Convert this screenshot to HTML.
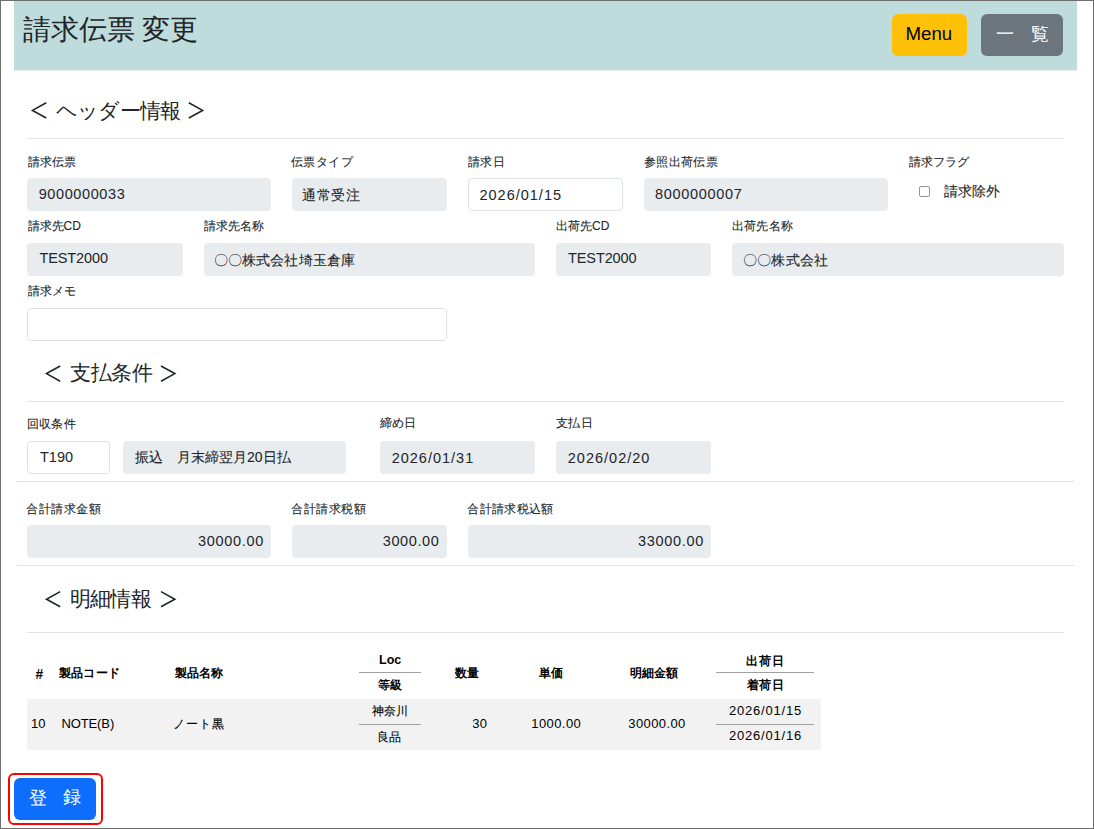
<!DOCTYPE html>
<html lang="ja"><head><meta charset="utf-8"><title>請求伝票 変更</title>
<style>
html,body{margin:0;padding:0;background:#fff}
body{width:1094px;height:829px;position:relative;overflow:hidden;font-family:"Liberation Sans",sans-serif;color:#212529}
.frame{position:absolute;left:0;top:0;width:1094px;height:829px;border:1px solid #6e6e6e;box-sizing:border-box}
.t{position:absolute;line-height:1;white-space:nowrap}
</style></head><body>
<div class="frame"></div>
<div style="position:absolute;left:14px;top:1px;width:1063px;height:69px;background:#bedcdc;border-radius:0px;box-sizing:border-box;"></div>
<div style="position:absolute;left:14px;top:70px;width:1063px;height:1px;background:#e9eaee"></div>
<div style="position:absolute;left:892px;top:14px;width:75px;height:42px;background:#ffc107;border-radius:6px;box-sizing:border-box;"></div>
<div style="position:absolute;left:981px;top:14px;width:82px;height:42px;background:#6c757d;border-radius:6px;box-sizing:border-box;"></div>
<div style="position:absolute;left:27px;top:138px;width:1037px;height:1px;background:#e0e4e8"></div>
<div style="position:absolute;left:27px;top:401px;width:1037px;height:1px;background:#e0e4e8"></div>
<div style="position:absolute;left:17px;top:481px;width:1057px;height:1px;background:#e0e4e8"></div>
<div style="position:absolute;left:17px;top:565px;width:1057px;height:1px;background:#e0e4e8"></div>
<div style="position:absolute;left:27px;top:632px;width:1037px;height:1px;background:#e0e4e8"></div>
<div style="position:absolute;left:27px;top:178px;width:244px;height:33px;background:#e9ecef;border-radius:4px;box-sizing:border-box;"></div>
<div style="position:absolute;left:292px;top:178px;width:155px;height:33px;background:#e9ecef;border-radius:4px;box-sizing:border-box;"></div>
<div style="position:absolute;left:468px;top:178px;width:155px;height:33px;background:#fff;border:1px solid #dee2e6;border-radius:4px;box-sizing:border-box;"></div>
<div style="position:absolute;left:644px;top:178px;width:244px;height:33px;background:#e9ecef;border-radius:4px;box-sizing:border-box;"></div>
<div style="position:absolute;left:919px;top:186px;width:11px;height:11px;background:#fff;border:1px solid #959595;border-radius:2px;box-sizing:border-box;"></div>
<div style="position:absolute;left:27px;top:243px;width:156px;height:33px;background:#e9ecef;border-radius:4px;box-sizing:border-box;"></div>
<div style="position:absolute;left:204px;top:243px;width:331px;height:33px;background:#e9ecef;border-radius:4px;box-sizing:border-box;"></div>
<div style="position:absolute;left:556px;top:243px;width:155px;height:33px;background:#e9ecef;border-radius:4px;box-sizing:border-box;"></div>
<div style="position:absolute;left:732px;top:243px;width:332px;height:33px;background:#e9ecef;border-radius:4px;box-sizing:border-box;"></div>
<div style="position:absolute;left:27px;top:308px;width:420px;height:33px;background:#fff;border:1px solid #dee2e6;border-radius:4px;box-sizing:border-box;"></div>
<div style="position:absolute;left:27px;top:441px;width:83px;height:33px;background:#fff;border:1px solid #dee2e6;border-radius:4px;box-sizing:border-box;"></div>
<div style="position:absolute;left:123px;top:441px;width:223px;height:33px;background:#e9ecef;border-radius:4px;box-sizing:border-box;"></div>
<div style="position:absolute;left:380px;top:441px;width:155px;height:33px;background:#e9ecef;border-radius:4px;box-sizing:border-box;"></div>
<div style="position:absolute;left:556px;top:441px;width:155px;height:33px;background:#e9ecef;border-radius:4px;box-sizing:border-box;"></div>
<div style="position:absolute;left:27px;top:525px;width:244px;height:33px;background:#e9ecef;border-radius:4px;box-sizing:border-box;"></div>
<div style="position:absolute;left:292px;top:525px;width:155px;height:33px;background:#e9ecef;border-radius:4px;box-sizing:border-box;"></div>
<div style="position:absolute;left:468px;top:525px;width:243px;height:33px;background:#e9ecef;border-radius:4px;box-sizing:border-box;"></div>
<div style="position:absolute;left:27px;top:699px;width:794px;height:51px;background:#f2f2f2;border-radius:0px;box-sizing:border-box;"></div>
<div style="position:absolute;left:359px;top:672px;width:62px;height:1px;background:#a0a0a0"></div>
<div style="position:absolute;left:359px;top:724px;width:62px;height:1px;background:#a0a0a0"></div>
<div style="position:absolute;left:716px;top:672px;width:98px;height:1px;background:#a0a0a0"></div>
<div style="position:absolute;left:716px;top:724px;width:98px;height:1px;background:#a0a0a0"></div>
<div style="position:absolute;left:14px;top:778px;width:82px;height:42px;background:#0d6efd;border-radius:6px;box-sizing:border-box;"></div>
<div style="position:absolute;left:8px;top:773px;width:95px;height:52px;background:transparent;border-radius:6px;box-sizing:border-box;border:2px solid #ff0000;"></div>
<svg style="position:absolute;left:0;top:0" width="1094" height="829"><path d="M46.2 102.80000000000001 L32.5 110.4 L46.2 118.0" fill="none" stroke="#212529" stroke-width="1.6"/><path d="M188.8 102.80000000000001 L202.6 110.4 L188.8 118.0" fill="none" stroke="#212529" stroke-width="1.6"/><path d="M60.2 366.0 L46.5 373.6 L60.2 381.20000000000005" fill="none" stroke="#212529" stroke-width="1.6"/><path d="M161 366.0 L174.8 373.6 L161 381.20000000000005" fill="none" stroke="#212529" stroke-width="1.6"/><path d="M60.2 591.6 L46.5 599.2 L60.2 606.8000000000001" fill="none" stroke="#212529" stroke-width="1.6"/><path d="M161 591.6 L174.8 599.2 L161 606.8000000000001" fill="none" stroke="#212529" stroke-width="1.6"/></svg>
<div class="t" style="left:22.5px;top:16px;font-size:28.0px;letter-spacing:0px;font-weight:400;color:#212529;">請求伝票 変更</div>
<div class="t" style="left:905.5px;top:25px;font-size:18.7px;letter-spacing:0px;font-weight:400;color:#000;">Menu</div>
<div class="t" style="left:995.5px;top:26px;font-size:17.6px;letter-spacing:0.0px;font-weight:400;color:#fff;">一</div>
<div class="t" style="left:1030.5px;top:26px;font-size:17.6px;letter-spacing:0.0px;font-weight:400;color:#fff;">覧</div>
<div class="t" style="left:56px;top:100px;font-size:21px;letter-spacing:-0.8px;font-weight:400;color:#212529;">ヘッダー情報</div>
<div class="t" style="left:69.75px;top:362px;font-size:21px;letter-spacing:-0.2px;font-weight:400;color:#212529;">支払条件</div>
<div class="t" style="left:69.7px;top:588px;font-size:21px;letter-spacing:-0.6px;font-weight:400;color:#212529;">明細情報</div>
<div class="t" style="left:27.55px;top:156px;font-size:12px;letter-spacing:0.2px;font-weight:400;color:#212529;-webkit-text-stroke:0.1px #212529;">請求伝票</div>
<div class="t" style="left:291.1px;top:156px;font-size:12px;letter-spacing:0.4px;font-weight:400;color:#212529;-webkit-text-stroke:0.1px #212529;">伝票タイプ</div>
<div class="t" style="left:468px;top:156px;font-size:12px;letter-spacing:0.3px;font-weight:400;color:#212529;-webkit-text-stroke:0.1px #212529;">請求日</div>
<div class="t" style="left:643.8px;top:156px;font-size:12px;letter-spacing:0.4px;font-weight:400;color:#212529;-webkit-text-stroke:0.1px #212529;">参照出荷伝票</div>
<div class="t" style="left:908.6px;top:156px;font-size:12px;letter-spacing:0.2px;font-weight:400;color:#212529;-webkit-text-stroke:0.1px #212529;">請求フラグ</div>
<div class="t" style="left:38.7px;top:187px;font-size:14.5px;letter-spacing:0.6px;font-weight:400;color:#212529;">9000000033</div>
<div class="t" style="left:302px;top:188px;font-size:14px;letter-spacing:0.5px;font-weight:400;color:#212529;-webkit-text-stroke:0.1px #212529;">通常受注</div>
<div class="t" style="left:479.45px;top:188px;font-size:14.5px;letter-spacing:1.0px;font-weight:400;color:#212529;">2026/01/15</div>
<div class="t" style="left:654.95px;top:187px;font-size:14.5px;letter-spacing:0.7px;font-weight:400;color:#212529;">8000000007</div>
<div class="t" style="left:944.35px;top:185px;font-size:13.8px;letter-spacing:-0.2px;font-weight:400;color:#212529;-webkit-text-stroke:0.1px #212529;">請求除外</div>
<div class="t" style="left:27.5px;top:220px;font-size:12px;letter-spacing:0.0px;font-weight:400;color:#212529;-webkit-text-stroke:0.1px #212529;">請求先CD</div>
<div class="t" style="left:203.65px;top:220px;font-size:12px;letter-spacing:0.0px;font-weight:400;color:#212529;-webkit-text-stroke:0.1px #212529;">請求先名称</div>
<div class="t" style="left:556px;top:220px;font-size:12px;letter-spacing:0.0px;font-weight:400;color:#212529;-webkit-text-stroke:0.1px #212529;">出荷先CD</div>
<div class="t" style="left:732px;top:220px;font-size:12px;letter-spacing:0.2px;font-weight:400;color:#212529;-webkit-text-stroke:0.1px #212529;">出荷先名称</div>
<div class="t" style="left:39.45px;top:251px;font-size:14.5px;letter-spacing:-0.1px;font-weight:400;color:#212529;">TEST2000</div>
<div class="t" style="left:214px;top:253px;font-size:14px;letter-spacing:0.1px;font-weight:400;color:#212529;-webkit-text-stroke:0.1px #212529;">〇〇株式会社埼玉倉庫</div>
<div class="t" style="left:568px;top:251px;font-size:14.5px;letter-spacing:-0.1px;font-weight:400;color:#212529;">TEST2000</div>
<div class="t" style="left:743px;top:253px;font-size:14px;letter-spacing:0.2px;font-weight:400;color:#212529;-webkit-text-stroke:0.1px #212529;">〇〇株式会社</div>
<div class="t" style="left:28px;top:285px;font-size:12px;letter-spacing:0.0px;font-weight:400;color:#212529;-webkit-text-stroke:0.1px #212529;">請求メモ</div>
<div class="t" style="left:27px;top:418px;font-size:12px;letter-spacing:0.2px;font-weight:400;color:#212529;-webkit-text-stroke:0.1px #212529;">回収条件</div>
<div class="t" style="left:379.6px;top:417px;font-size:12px;letter-spacing:0.3px;font-weight:400;color:#212529;-webkit-text-stroke:0.1px #212529;">締め日</div>
<div class="t" style="left:556px;top:417px;font-size:12px;letter-spacing:0.3px;font-weight:400;color:#212529;-webkit-text-stroke:0.1px #212529;">支払日</div>
<div class="t" style="left:40px;top:450px;font-size:14.5px;letter-spacing:0.0px;font-weight:400;color:#212529;">T190</div>
<div class="t" style="left:135px;top:450px;font-size:14px;letter-spacing:0.0px;font-weight:400;color:#212529;-webkit-text-stroke:0.1px #212529;">振込　月末締翌月20日払</div>
<div class="t" style="left:391.65px;top:451px;font-size:14.5px;letter-spacing:1.0px;font-weight:400;color:#212529;">2026/01/31</div>
<div class="t" style="left:567.8px;top:451px;font-size:14.5px;letter-spacing:1.0px;font-weight:400;color:#212529;">2026/02/20</div>
<div class="t" style="left:26px;top:503px;font-size:12px;letter-spacing:0.5px;font-weight:400;color:#212529;-webkit-text-stroke:0.1px #212529;">合計請求金額</div>
<div class="t" style="left:291px;top:503px;font-size:12px;letter-spacing:0.5px;font-weight:400;color:#212529;-webkit-text-stroke:0.1px #212529;">合計請求税額</div>
<div class="t" style="left:467.35px;top:503px;font-size:12px;letter-spacing:0.3px;font-weight:400;color:#212529;-webkit-text-stroke:0.1px #212529;">合計請求税込額</div>
<div class="t" style="left:197.9px;top:534px;font-size:14.5px;letter-spacing:0.7px;font-weight:400;color:#212529;">30000.00</div>
<div class="t" style="left:382.75px;top:534px;font-size:14.5px;letter-spacing:0.6px;font-weight:400;color:#212529;">3000.00</div>
<div class="t" style="left:638px;top:534px;font-size:14.5px;letter-spacing:0.7px;font-weight:400;color:#212529;">33000.00</div>
<div class="t" style="left:35.5px;top:668px;font-size:13.78px;letter-spacing:0px;font-weight:700;color:#000;">#</div>
<div class="t" style="left:59px;top:667px;font-size:12px;letter-spacing:0.2px;font-weight:700;color:#000;">製品コード</div>
<div class="t" style="left:175px;top:667px;font-size:12px;letter-spacing:0.0px;font-weight:700;color:#000;">製品名称</div>
<div class="t" style="left:379px;top:654px;font-size:12.5px;letter-spacing:0px;font-weight:700;color:#000;">Loc</div>
<div class="t" style="left:378px;top:679px;font-size:12px;letter-spacing:0.0px;font-weight:700;color:#000;">等級</div>
<div class="t" style="left:454.55px;top:667px;font-size:12px;letter-spacing:0.0px;font-weight:700;color:#000;">数量</div>
<div class="t" style="left:539.45px;top:667px;font-size:12px;letter-spacing:0.0px;font-weight:700;color:#000;">単価</div>
<div class="t" style="left:630px;top:667px;font-size:12px;letter-spacing:0.0px;font-weight:700;color:#000;">明細金額</div>
<div class="t" style="left:746.4px;top:655px;font-size:12px;letter-spacing:0.8px;font-weight:700;color:#000;">出荷日</div>
<div class="t" style="left:747px;top:679px;font-size:12px;letter-spacing:0.3px;font-weight:700;color:#000;">着荷日</div>
<div class="t" style="left:31px;top:717px;font-size:13px;letter-spacing:0.0px;font-weight:400;color:#000;">10</div>
<div class="t" style="left:61.4px;top:717px;font-size:13px;letter-spacing:-0.1px;font-weight:400;color:#000;">NOTE(B)</div>
<div class="t" style="left:173px;top:718px;font-size:12px;letter-spacing:0.9px;font-weight:400;color:#000;-webkit-text-stroke:0.1px #000;">ノート黒</div>
<div class="t" style="left:371.65px;top:705px;font-size:12px;letter-spacing:0.3px;font-weight:400;color:#000;-webkit-text-stroke:0.1px #000;">神奈川</div>
<div class="t" style="left:376.5px;top:731px;font-size:12px;letter-spacing:0.5px;font-weight:400;color:#000;-webkit-text-stroke:0.1px #000;">良品</div>
<div class="t" style="left:472.2px;top:717px;font-size:13px;letter-spacing:0.4px;font-weight:400;color:#000;">30</div>
<div class="t" style="left:531.35px;top:717px;font-size:13px;letter-spacing:0.4px;font-weight:400;color:#000;">1000.00</div>
<div class="t" style="left:628.3px;top:717px;font-size:13px;letter-spacing:0.4px;font-weight:400;color:#000;">30000.00</div>
<div class="t" style="left:729px;top:704px;font-size:13px;letter-spacing:0.8px;font-weight:400;color:#000;">2026/01/15</div>
<div class="t" style="left:729px;top:729px;font-size:13px;letter-spacing:0.8px;font-weight:400;color:#000;">2026/01/16</div>
<div class="t" style="left:28.75px;top:790px;font-size:17.6px;letter-spacing:0.0px;font-weight:400;color:#fff;">登</div>
<div class="t" style="left:63.05px;top:789px;font-size:17.6px;letter-spacing:0.0px;font-weight:400;color:#fff;">録</div>
</body></html>
